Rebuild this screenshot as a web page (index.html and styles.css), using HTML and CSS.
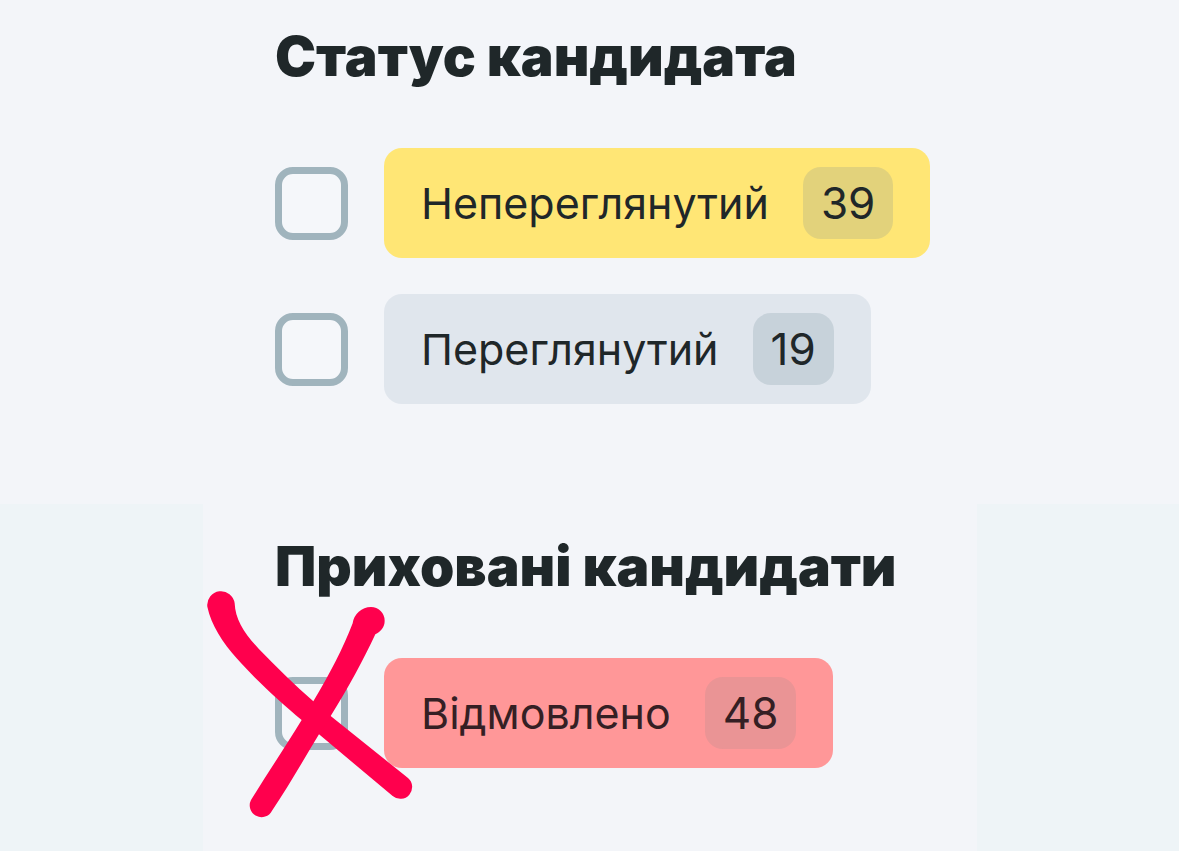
FILE: index.html
```html
<!DOCTYPE html>
<html lang="uk">
<head>
<meta charset="utf-8">
<meta name="viewport" content="width=device-width, initial-scale=1">
<title>Статус кандидата</title>
<link rel="stylesheet" href="styles.css">
</head>
<body>
<main class="page">
  <section class="group">
    <h2 class="title">Статус кандидата</h2>
    <div class="options">
      <div class="option">
        <input class="check" type="checkbox" id="unseen">
        <label class="tag tag-yellow" for="unseen">Непереглянутий <span class="count">39</span></label>
      </div>
      <div class="option">
        <input class="check" type="checkbox" id="seen">
        <label class="tag tag-gray" for="seen">Переглянутий <span class="count">19</span></label>
      </div>
    </div>
  </section>
  <section class="group group-hidden">
    <div class="panel">
      <h2 class="title">Приховані кандидати</h2>
      <div class="options">
        <div class="option">
          <input class="check" type="checkbox" id="refused">
          <label class="tag tag-red" for="refused">Відмовлено <span class="count">48</span></label>
          <svg class="cross" viewBox="51 33 618 684" width="206" height="228" aria-hidden="true">
            <path d="M52 80A41 41 0 0 1 134 70C136 118 162 160 206 206C260 262 315 315 370 364L422 408L654 594A35 35 0 0 1 608 648L387 463L335 420C270 366 190 292 140 235C98 187 64 136 52 80Z"/>
            <path d="M488 130A56 56 0 0 1 543 81A41 41 0 0 1 584 122C584 142 572 154 556 163C520 240 476 322 422 408L387 463C340 540 294 622 246 692A35 35 0 0 1 183 660C232 580 284 504 335 420L370 364C418 284 460 204 488 130Z"/>
          </svg>
        </div>
      </div>
    </div>
  </section>
</main>
</body>
</html>
```
FILE: styles.css
```css
* { box-sizing: border-box; }
body {
  margin: 0;
  background: #f3f5f9;
  color: #1f2729;
  font-family: Inter, "Noto Sans", sans-serif;
}
.page {
  display: flex;
  flex-direction: column;
  min-height: 100vh;
}
.group { padding: 20px 204px 100px 275px; }
.group-hidden {
  display: flex;
  flex-grow: 1;
  padding: 0 202px 0 203px;
  background: #eef4f7;
}
.panel {
  flex-grow: 1;
  padding: 26px 72px 84px;
  background: #f3f5f9;
}
.title {
  margin: 0 0 56px;
  font-size: 55px;
  line-height: 72px;
  font-weight: 900;
}
.options { display: grid; gap: 36px; }
.option {
  position: relative;
  display: flex;
  align-items: center;
  gap: 36px;
}
.check {
  appearance: none;
  flex: none;
  width: 73px;
  height: 73px;
  margin: 0;
  border: 7px solid #a0b4bd;
  border-radius: 18px;
  background: #f5f7fa;
}
.tag {
  display: flex;
  align-items: center;
  gap: 34px;
  height: 110px;
  padding: 0 37px;
  border-radius: 18px;
  font-size: 43px;
  white-space: nowrap;
}
.tag-yellow { background: #ffe675; }
.tag-gray { background: #e0e6ed; }
.tag-red { background: #ff9798; color: #351f24; }
.count {
  padding: 0 18px;
  border-radius: 18px;
  font-size: 44px;
  line-height: 72px;
}
.tag-yellow .count { background: #e2d27b; }
.tag-gray .count { background: #c7d2da; }
.tag-red .count { background: #ea9495; }
.cross {
  position: absolute;
  left: -68px;
  top: -67px;
  fill: #ff004d;
  pointer-events: none;
}
```
